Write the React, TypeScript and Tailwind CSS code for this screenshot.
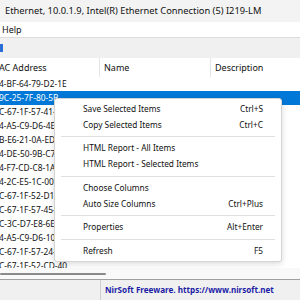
import React from "react";

const rows = [
  "4-BF-64-79-D2-1E",
  "9C-25-7F-80-5B",
  "C-67-1F-57-41-2A",
  "4-A5-C9-D6-4E-11",
  "B-E6-21-0A-ED-7C",
  "4-DE-50-9B-C7-30",
  "4-F7-CD-C8-1A-52",
  "4-2C-E5-1C-00-9D",
  "C-67-1F-52-D1-06",
  "C-67-1F-57-45-B8",
  "C-3C-D7-E8-6E-21",
  "4-A5-C9-D6-10-4F",
  "C-67-1F-57-24-93",
  "C-67-1F-52-CD-40",
];

type Item = { label: string; key?: string } | "sep";

const menu: Item[] = [
  { label: "Save Selected Items", key: "Ctrl+S" },
  { label: "Copy Selected Items", key: "Ctrl+C" },
  "sep",
  { label: "HTML Report - All Items" },
  { label: "HTML Report - Selected Items" },
  "sep",
  { label: "Choose Columns" },
  { label: "Auto Size Columns", key: "Ctrl+Plus" },
  "sep",
  { label: "Properties", key: "Alt+Enter" },
  "sep",
  { label: "Refresh", key: "F5" },
];

export default function App() {
  return (
    <div className="relative w-[300px] h-[300px] overflow-hidden bg-white text-[#111] text-[9px] leading-none font-['Noto_Sans',sans-serif]">
      {/* title */}
      <div className="h-[22px] bg-[#f3f3f3] flex items-center pl-[5px] whitespace-nowrap text-[9.3px]">
        Ethernet, 10.0.1.9, Intel(R) Ethernet Connection (5) I219-LM
      </div>
      {/* menu bar */}
      <div className="h-[15px] bg-white flex items-center pl-[2px]">Help</div>
      {/* toolbar */}
      <div className="h-[21px] bg-[#f0f0f0] border-t border-[#dcdcdc] flex items-center">
        <div className="w-[3px] h-[8px] bg-[#2a6fd6] -mt-[1px]" />
      </div>
      {/* header */}
      <div className="h-[19px] flex bg-white">
        <div className="w-[100px] flex items-center border-r border-[#e5e5e5] overflow-hidden whitespace-nowrap">
          <span className="-ml-[1px]">AC Address</span>
        </div>
        <div className="w-[111px] flex items-center pl-[4px] border-r border-[#e5e5e5]">Name</div>
        <div className="flex-1 flex items-center pl-[4px]">Description</div>
      </div>
      {/* list */}
      <div className="h-[191px] overflow-hidden text-[8.4px]">
        {rows.map((r, i) => (
          <div
            key={i}
            className={
              "h-[14px] flex items-center whitespace-nowrap " +
              (i === 1 ? "bg-[#0078d7] text-white" : "")
            }
          >
            <span className="-ml-[1px]">{r}</span>
          </div>
        ))}
      </div>
      {/* h scrollbar */}
      <div className="h-[11px] bg-[#f9f9f9] flex items-center">
        <div className="w-[106px] h-[2px] bg-[#8a8a8a] rounded-full mt-[1px]" />
      </div>
      {/* status */}
      <div className="h-[21px] border-t border-[#a0a0a0] bg-[#f0f0f0] flex">
        <div className="w-[101px] border-r border-[#d0d0d0]" />
        <div className="flex items-center pl-[4px] font-bold text-[8.1px] text-[#1c1ca6] whitespace-nowrap">
          NirSoft Freeware. https://www.nirsoft.net
        </div>
      </div>

      {/* context menu */}
      <div className="absolute left-[54px] top-[98px] w-[228px] bg-white border border-[#d4d4d4] rounded-[3px] shadow-[0_2px_6px_rgba(0,0,0,0.15)] py-[2px] text-[8.3px]">
        {menu.map((m, i) =>
          m === "sep" ? (
            <div key={i} className="h-[7.5px] flex items-center px-[6px]">
              <div className="h-px w-full bg-[#e0e0e0]" />
            </div>
          ) : (
            <div key={i} className="h-[16px] flex items-center justify-between pl-[28px] pr-[18px] whitespace-nowrap">
              <span>{m.label}</span>
              <span>{m.key ?? ""}</span>
            </div>
          )
        )}
      </div>
    </div>
  );
}
